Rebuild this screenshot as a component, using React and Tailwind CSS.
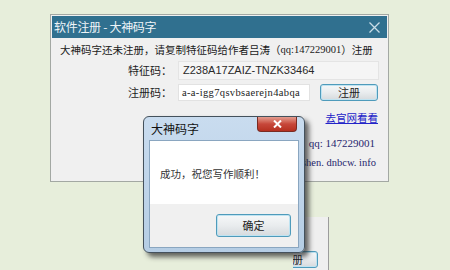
import React from "react";

const cjk = { fontFamily: '"Noto Sans CJK SC", "Liberation Sans", sans-serif' };
const serif = { fontFamily: '"Liberation Serif", "Noto Sans CJK SC", serif' };

function Field({ width, white, children, className = "" }) {
  return (
    <div
      className={`flex items-center border ${white ? "bg-white border-[#e2e2e2]" : "bg-[#f5f5f5] border-[#e4e4e4]"} ${width} ${className}`}
    >
      {children}
    </div>
  );
}

function WinButton({ children, className = "" }) {
  return (
    <div
      className={`flex items-center justify-center rounded-[3px] border border-[#4f9bbb] bg-gradient-to-b from-[#f6f8f9] via-[#e9ecee] to-[#d6dadd] shadow-[inset_0_0_0_1px_#bfe3f1] text-[11px] text-[#222] ${className}`}
      style={cjk}
    >
      {children}
    </div>
  );
}

export default function App() {
  return (
    <div className="relative w-[450px] h-[270px] overflow-hidden bg-[#e7eedb]">
      {/* main registration window */}
      <div className="absolute left-[50px] top-[14px] w-[339px] h-[168px] border border-[#a3a8a3] bg-[#f0f0f0] flex flex-col">
        <div className="mx-px mt-px h-[22px] bg-[#30708f] flex items-center justify-between pl-[2px] pr-[6px]">
          <span className="text-[12px] text-[#eef4f8] tracking-[-0.3px]" style={cjk}>
            软件注册 - 大神码字
          </span>
          <svg width="13" height="13" viewBox="0 0 13 13">
            <path d="M1.5 1.5 L11.5 11.5 M11.5 1.5 L1.5 11.5" stroke="#c9dde8" strokeWidth="1.3" fill="none" />
          </svg>
        </div>

        <div className="flex flex-col pt-[5px]">
          <div className="h-[14px] flex items-center pl-[9px] text-[10.5px] text-[#1a1a1a] whitespace-nowrap" style={cjk}>
            大神码字还未注册，请复制特征码给作者吕涛（
            <span className="text-[10.5px]" style={serif}>qq:147229001</span>
            ）注册
          </div>

          <div className="mt-[4px] flex items-center">
            <div className="w-[121px] text-right text-[11px] text-[#1d1d1d]" style={cjk}>特征码：</div>
            <Field width="w-[201px] h-[19px]" className="ml-[6px]">
              <span className="pl-[4px] text-[11px] text-[#2a2a2a]" style={{ fontFamily: '"Liberation Sans", sans-serif' }}>
                Z238A17ZAIZ-TNZK33464
              </span>
            </Field>
          </div>

          <div className="mt-[4px] flex items-center">
            <div className="w-[121px] text-right text-[11px] text-[#1d1d1d]" style={cjk}>注册码：</div>
            <Field white width="w-[132px] h-[17px]" className="ml-[6px]">
              <span className="pl-[3px] text-[10.5px] tracking-[0.35px] text-[#222]" style={serif}>
                a-a-igg7qsvbsaerejn4abqa
              </span>
            </Field>
            <WinButton className="ml-[10px] w-[58px] h-[17px]">注册</WinButton>
          </div>

          <div className="mt-[11px] flex justify-end pr-[10px]">
            <span className="text-[10.5px] leading-[12px] text-[#2323c8] underline" style={cjk}>去官网看看</span>
          </div>

          <div className="mt-[13px] flex justify-end pr-[13px]">
            <span className="text-[11px] leading-[12px] text-[#26266e] whitespace-nowrap" style={serif}>qq: 147229001</span>
          </div>
          <div className="mt-[8px] flex justify-end pr-[12px]">
            <span className="text-[10.5px] leading-[12px] text-[#26266e] whitespace-nowrap" style={serif}>http://shen. dnbcw. info</span>
          </div>
        </div>
      </div>

      {/* second window peeking out behind the message box */}
      <div className="absolute left-[293px] top-[217px] w-[36px] h-[60px] bg-[#efefef] border-r border-[#9c9c9c] overflow-hidden">
        <WinButton className="absolute left-[-27px] top-[34px] w-[52px] h-[17px]">注册</WinButton>
      </div>

      {/* message box */}
      <div className="absolute left-[143px] top-[116px] w-[162px] h-[137px] rounded-[6px] border border-[#44515c] bg-gradient-to-b from-[#c9dcef] to-[#b5cde4] shadow-[4px_4px_5px_rgba(40,40,40,0.7)] flex flex-col px-[5px] pb-[4px]">
        <div className="h-[23px] flex items-start justify-between">
          <span className="mt-[3px] ml-[2px] text-[12px] text-[#111]" style={cjk}>大神码字</span>
          <div className="mr-[2px] w-[40px] h-[15px] rounded-b-[4px] border border-[#7a2b22] border-t-0 bg-gradient-to-b from-[#e39c8f] via-[#c7473a] to-[#b5301f] flex items-center justify-center">
            <svg width="9" height="8" viewBox="0 0 9 8">
              <path d="M1 0.5 L8 7.5 M8 0.5 L1 7.5" stroke="#ffffff" strokeWidth="2" fill="none" />
            </svg>
          </div>
        </div>
        <div className="flex-1 border border-[#8aa6c0] flex flex-col">
          <div className="h-[63px] bg-white flex items-center pl-[10px]">
            <span className="mt-[2px] text-[10.5px] text-[#333]" style={cjk}>成功，祝您写作顺利！</span>
          </div>
          <div className="flex-1 bg-[#f0f0f0] flex items-start justify-end pr-[7px] pt-[10px]">
            <WinButton className="w-[75px] h-[23px]">确定</WinButton>
          </div>
        </div>
      </div>
    </div>
  );
}
